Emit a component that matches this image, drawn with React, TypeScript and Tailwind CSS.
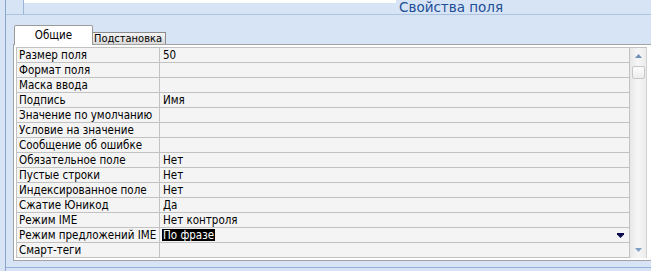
import React from "react"

const rows: [string, string][] = [
  ["Размер поля", "50"],
  ["Формат поля", ""],
  ["Маска ввода", ""],
  ["Подпись", "Имя"],
  ["Значение по умолчанию", ""],
  ["Условие на значение", ""],
  ["Сообщение об ошибке", ""],
  ["Обязательное поле", "Нет"],
  ["Пустые строки", "Нет"],
  ["Индексированное поле", "Нет"],
  ["Сжатие Юникод", "Да"],
  ["Режим IME", "Нет контроля"],
  ["Режим предложений IME", "По фразе"],
  ["Смарт-теги", ""],
]

const gridFont = { fontFamily: '"DejaVu Sans Condensed", "DejaVu Sans", "Liberation Sans", sans-serif' }

function PropertyRow({ label, value, selected }: { label: string; value: string; selected?: boolean }) {
  return (
    <div className="flex h-[15px] border-b border-[#c2c2c2] text-[11.5px] leading-[14px] text-black">
      <div className="w-[143px] shrink-0 border-r border-[#c2c2c2] pl-[2px] whitespace-nowrap overflow-hidden">
        {label}
      </div>
      <div className="flex-1 flex items-center pl-[2px] pr-[5px]">
        {selected ? (
          <>
            <span className="bg-black text-white px-[1px] h-[12px] leading-[12px]">{value}</span>
            <svg width="7" height="5" viewBox="0 0 7 5" className="ml-auto">
              <path d="M0 0h7v1.5L3.5 5 0 1.5z" fill="#0b0b4f" />
            </svg>
          </>
        ) : (
          <span className="pl-[1px]">{value}</span>
        )}
      </div>
    </div>
  )
}

function ScrollBar() {
  return (
    <div className="w-[17px] shrink-0 border-r border-[#d0d0d0] bg-gradient-to-r from-[#e8e8e8] via-[#f6f6f6] to-[#ececec] flex flex-col items-center">
      <svg width="7" height="4" viewBox="0 0 7 4" className="mt-[6px]">
        <path d="M3.5 0L7 4H0z" fill="#6f90b8" />
      </svg>
      <div className="mt-[8px] w-[13px] h-[13px] rounded-[2px] border border-[#c6c6c6] bg-gradient-to-b from-[#fdfdfd] to-[#ececec]" />
      <svg width="7" height="4" viewBox="0 0 7 4" className="mt-auto mb-[6px]">
        <path d="M0 0h7L3.5 4z" fill="#7fa0c4" />
      </svg>
    </div>
  )
}

export default function App() {
  return (
    <div className="w-[651px] h-[271px] overflow-hidden bg-[#d6e4f5] flex">
      <div className="w-[5px] shrink-0" />
      <div className="flex-1 flex flex-col border-l border-[#8aa6c8]">
        {/* section header */}
        <div className="h-[15px] flex border-b border-[#aec3de]">
          <div className="w-[18px] shrink-0 border-r border-[#9cb4d3]" />
          <div className="w-[372px] h-[3px] bg-white shrink-0" />
          <div
            className="ml-[3px] text-[13.5px] leading-[14px] text-[#1e4e96] whitespace-nowrap"
            style={{ fontFamily: '"DejaVu Sans", "Liberation Sans", sans-serif' }}
          >
            Свойства поля
          </div>
        </div>

        {/* tabs */}
        <div className="ml-[7px] mt-[10px] flex items-end" style={gridFont}>
          <div className="ml-[1px] w-[79px] h-[20px] -mb-[1px] bg-white border-t border-l border-r border-[#9a9a9a] rounded-t-[2px] text-[11.5px] leading-[16px] text-black text-center pt-[1px] relative z-10">
            Общие
          </div>
          <div className="w-[73px] h-[12px] bg-gradient-to-b from-[#f4f4f4] to-[#d9d9d9] border-t border-r border-[#8c8c8c] text-[11px] leading-[11px] text-black pl-[1px] whitespace-nowrap overflow-hidden">
            Подстановка
          </div>
        </div>

        {/* property sheet */}
        <div className="ml-[7px] h-[217px] bg-white border-t border-l border-b border-[#a3a3a3] pt-[2px] pl-[2px] flex items-start" style={gridFont}>
          <div className="flex-1 flex border-t border-l border-[#c2c2c2]">
            <div className="flex-1 border-r border-[#c2c2c2] bg-[#f4f4f4]">
              {rows.map(([label, value], i) => (
                <PropertyRow key={label} label={label} value={value} selected={i === 12} />
              ))}
            </div>
            <ScrollBar />
          </div>
          <div className="w-[4px] shrink-0" />
        </div>

        <div className="mt-[6px] h-[1px] bg-[#95b3da]" />
      </div>
    </div>
  )
}
